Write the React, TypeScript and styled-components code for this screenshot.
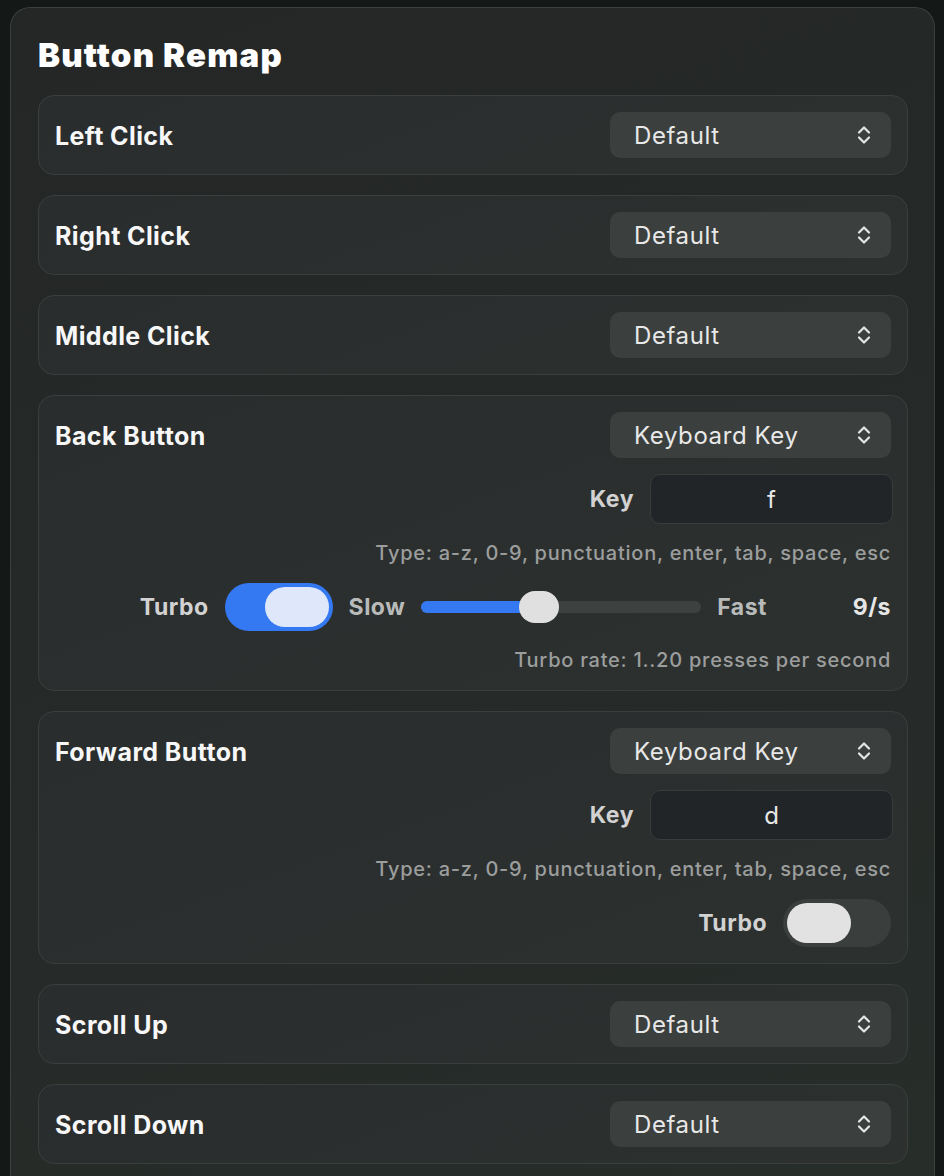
import React from "react";
import styled, { createGlobalStyle } from "styled-components";

const GlobalStyle = createGlobalStyle`
  body {
    margin: 0;
    background: #141817;
    font-family: Inter, "Noto Sans", sans-serif;
    -webkit-font-smoothing: antialiased;
  }
`;

type Remap = {
  name: string;
  action: string;
  keyValue?: string;
  turbo?: boolean;
  rate?: number;
};

const rows: Remap[] = [
  { name: "Left Click", action: "Default" },
  { name: "Right Click", action: "Default" },
  { name: "Middle Click", action: "Default" },
  { name: "Back Button", action: "Keyboard Key", keyValue: "f", turbo: true, rate: 9 },
  { name: "Forward Button", action: "Keyboard Key", keyValue: "d", turbo: false },
  { name: "Scroll Up", action: "Default" },
  { name: "Scroll Down", action: "Default" },
];

const Chevrons = () => (
  <svg width="16" height="22" viewBox="0 0 16 22" fill="none">
    <path
      d="M3 8.5 L8 3.5 L13 8.5 M3 13.5 L8 18.5 L13 13.5"
      stroke="#e6e6e6"
      strokeWidth="2.2"
      strokeLinecap="round"
      strokeLinejoin="round"
    />
  </svg>
);

const RemapCard = ({ row }: { row: Remap }) => {
  const isKey = row.action === "Keyboard Key";
  const fill = row.rate ? ((row.rate - 1) / 19) * 100 : 0;
  return (
    <Card>
      <HeaderRow>
        <CardLabel>{row.name}</CardLabel>
        <Select>
          <span>{row.action}</span>
          <Chevrons />
        </Select>
      </HeaderRow>
      {isKey && (
        <>
          <RightRow>
            <FieldLabel>Key</FieldLabel>
            <KeyInput>{row.keyValue}</KeyInput>
          </RightRow>
          <Hint>Type: a-z, 0-9, punctuation, enter, tab, space, esc</Hint>
          <RightRow>
            <FieldLabel>Turbo</FieldLabel>
            <Toggle $on={!!row.turbo}>
              <Knob $on={!!row.turbo} />
            </Toggle>
            {row.turbo && (
              <>
                <RangeLabel>Slow</RangeLabel>
                <Track>
                  <Fill style={{ width: `${fill}%` }} />
                  <Thumb style={{ left: `${fill}%` }} />
                </Track>
                <RangeLabel>Fast</RangeLabel>
                <RateValue>{row.rate}/s</RateValue>
              </>
            )}
          </RightRow>
          {row.turbo && <Hint>Turbo rate: 1..20 presses per second</Hint>}
        </>
      )}
    </Card>
  );
};

const App = () => {
  return (
    <Page>
      <GlobalStyle />
      <Panel>
        <Title>Button Remap</Title>
        <CardList>
          {rows.map((r) => (
            <RemapCard key={r.name} row={r} />
          ))}
        </CardList>
      </Panel>
    </Page>
  );
};

export default App;

const Page = styled.div`
  padding: 7px 9px 0 10px;
  height: 1176px;
  box-sizing: border-box;
  overflow: hidden;
`;

const Panel = styled.div`
  border: 1px solid #3b3f3d;
  border-bottom: none;
  border-radius: 20px 20px 0 0;
  background: linear-gradient(160deg, #242726 0%, #262a28 60%, #27302b 100%);
  padding: 28px 26px 40px 27px;
  min-height: 1300px;
`;

const Title = styled.h1`
  margin: 0 0 21px 0;
  font-size: 33px;
  line-height: 38px;
  font-weight: 900;
  color: #ffffff;
  letter-spacing: 1.2px;
`;

const CardList = styled.div`
  display: flex;
  flex-direction: column;
  gap: 20px;
`;

const Card = styled.div`
  display: flex;
  flex-direction: column;
  gap: 16px;
  padding: 16px;
  border: 1px solid #3a3e3d;
  border-radius: 16px;
  background: linear-gradient(160deg, #2a2d2d 0%, #2c302f 100%);
`;

const HeaderRow = styled.div`
  display: flex;
  align-items: center;
  justify-content: space-between;
`;

const CardLabel = styled.div`
  font-size: 25px;
  font-weight: 700;
  letter-spacing: 0.4px;
  color: #f7f7f7;
  padding-top: 1px;
`;

const Select = styled.div`
  width: 281px;
  height: 46px;
  box-sizing: border-box;
  display: flex;
  align-items: center;
  justify-content: space-between;
  padding: 0 19px 0 24px;
  border-radius: 10px;
  background: #3b3f3d;
  font-size: 24px;
  font-weight: 400;
  letter-spacing: 0.6px;
  color: #e8e8e8;
`;

const RightRow = styled.div`
  display: flex;
  align-items: center;
  justify-content: flex-end;
  gap: 16px;
`;

const FieldLabel = styled.div`
  font-size: 23px;
  font-weight: 700;
  letter-spacing: 0.5px;
  color: #d2d2d2;
`;

const KeyInput = styled.div`
  width: 243px;
  height: 50px;
  box-sizing: border-box;
  display: flex;
  align-items: center;
  justify-content: center;
  margin-right: -2px;
  border: 1px solid #383c3c;
  border-radius: 10px;
  background: #222527;
  font-size: 24px;
  color: #e8e8e8;
`;

const Hint = styled.div`
  text-align: right;
  font-size: 20px;
  line-height: 27px;
  font-weight: 500;
  letter-spacing: 0.75px;
  color: #9c9e9d;
`;

const Toggle = styled.div<{ $on: boolean }>`
  width: 108px;
  height: 48px;
  box-sizing: border-box;
  padding: 4px;
  border-radius: 24px;
  display: flex;
  justify-content: ${(p) => (p.$on ? "flex-end" : "flex-start")};
  background: ${(p) => (p.$on ? "#3479f2" : "#3a3e3c")};
`;

const Knob = styled.div<{ $on: boolean }>`
  width: 64px;
  height: 40px;
  border-radius: 20px;
  background: ${(p) => (p.$on ? "#dfe8fb" : "#e2e2e2")};
`;

const RangeLabel = styled.div`
  font-size: 23px;
  font-weight: 700;
  letter-spacing: 0.5px;
  color: #b9bbba;
`;

const Track = styled.div`
  position: relative;
  width: 280px;
  height: 12px;
  border-radius: 6px;
  background: #3d413f;
`;

const Fill = styled.div`
  height: 100%;
  border-radius: 6px;
  background: #3479f2;
`;

const Thumb = styled.div`
  position: absolute;
  top: 50%;
  width: 40px;
  height: 32px;
  border-radius: 16px;
  background: #e0e0e0;
  transform: translate(-50%, -50%);
`;

const RateValue = styled.div`
  width: 108px;
  text-align: right;
  font-size: 23px;
  font-weight: 700;
  letter-spacing: 0.5px;
  color: #e6e6e6;
`;
